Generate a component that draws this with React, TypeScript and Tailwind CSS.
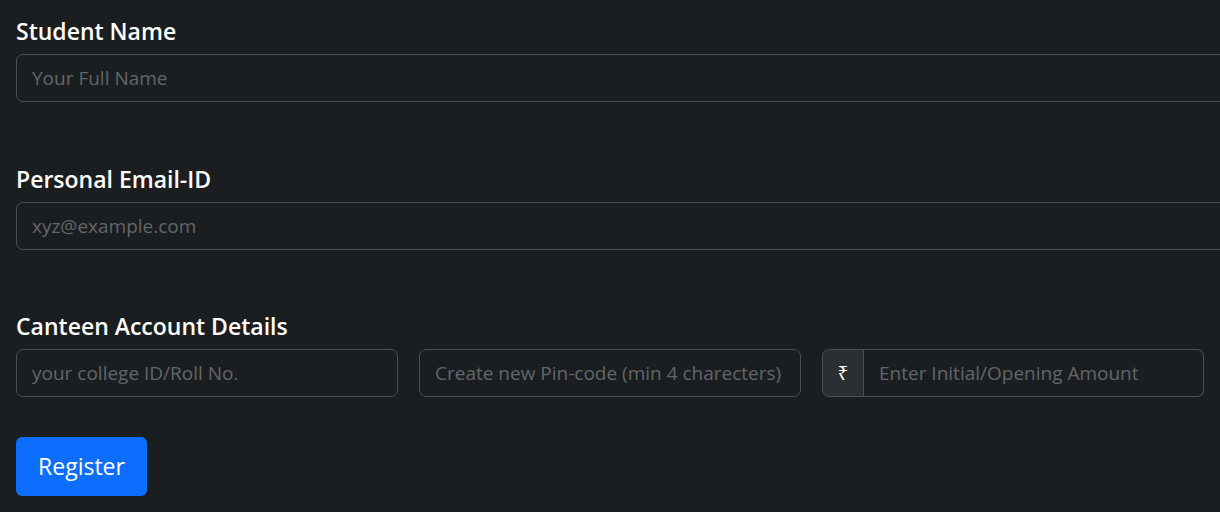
import React from "react";

const font = { fontFamily: '"Open Sans", "Noto Sans", sans-serif' };

export default function App() {
  const inputCls =
    "h-[48px] rounded-[7px] border border-[#4b4f52] bg-[#1b1e20] px-[15px] text-[19px] text-[#dee2e6] placeholder:text-[#62666a] outline-none";
  return (
    <div
      className="h-[512px] w-[1220px] overflow-hidden bg-[#1b1e20] pl-4 pt-[17px]"
      style={font}
    >
      <form className="flex flex-col">
        <label className="mb-2 text-[23px] font-semibold leading-[29px] text-white">Student Name</label>
        <input className={`${inputCls} w-[1230px]`} placeholder="Your Full Name" />

        <label className="mb-2 mt-[63px] text-[23px] font-semibold leading-[29px] text-white">Personal Email-ID</label>
        <input className={`${inputCls} w-[1230px]`} placeholder="xyz@example.com" />

        <label className="mb-2 mt-[62px] text-[23px] font-semibold leading-[29px] text-white">Canteen Account Details</label>
        <div className="flex w-[1188px] gap-[21px]">
          <input className={`${inputCls} w-[382px]`} placeholder="your college ID/Roll No." />
          <input className={`${inputCls} w-[382px]`} placeholder="Create new Pin-code (min 4 charecters)" />
          <div className="flex h-[48px] w-[382px]">
            <span className="flex w-[42px] items-center justify-center rounded-l-[7px] border border-[#4b4f52] bg-[#2b2f32] text-[19px] text-white">
              ₹
            </span>
            <input
              className="h-[48px] min-w-0 flex-1 rounded-r-[7px] border border-l-0 border-[#4b4f52] bg-[#1b1e20] px-[15px] text-[19px] text-[#dee2e6] placeholder:text-[#62666a] outline-none"
              placeholder="Enter Initial/Opening Amount"
            />
          </div>
        </div>

        <div className="mt-[40px]">
          <button
            type="button"
            className="h-[59px] w-[131px] rounded-[6px] bg-[#0d6efd] text-[23px] text-white"
          >
            Register
          </button>
        </div>
      </form>
    </div>
  );
}
